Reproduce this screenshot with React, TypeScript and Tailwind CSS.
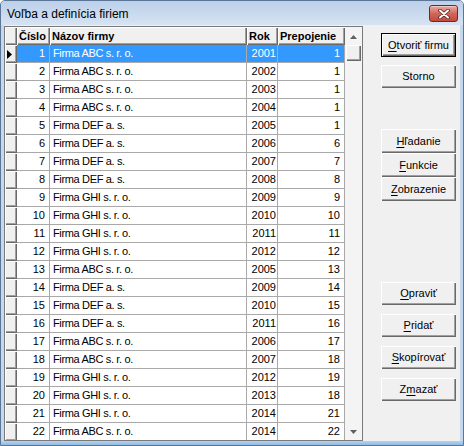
import React from 'react';

type Firm = { id: number; name: string; year: number; link: number };

const ABC = 'Firma ABC s. r. o.';
const DEF = 'Firma DEF a. s.';
const GHI = 'Firma GHI s. r. o.';

const firms: Firm[] = [
  { id: 1, name: ABC, year: 2001, link: 1 },
  { id: 2, name: ABC, year: 2002, link: 1 },
  { id: 3, name: ABC, year: 2003, link: 1 },
  { id: 4, name: ABC, year: 2004, link: 1 },
  { id: 5, name: DEF, year: 2005, link: 1 },
  { id: 6, name: DEF, year: 2006, link: 6 },
  { id: 7, name: DEF, year: 2007, link: 7 },
  { id: 8, name: DEF, year: 2008, link: 8 },
  { id: 9, name: GHI, year: 2009, link: 9 },
  { id: 10, name: GHI, year: 2010, link: 10 },
  { id: 11, name: GHI, year: 2011, link: 11 },
  { id: 12, name: GHI, year: 2012, link: 12 },
  { id: 13, name: ABC, year: 2005, link: 13 },
  { id: 14, name: DEF, year: 2009, link: 14 },
  { id: 15, name: DEF, year: 2010, link: 15 },
  { id: 16, name: DEF, year: 2011, link: 16 },
  { id: 17, name: ABC, year: 2006, link: 17 },
  { id: 18, name: ABC, year: 2007, link: 18 },
  { id: 19, name: GHI, year: 2012, link: 19 },
  { id: 20, name: GHI, year: 2013, link: 18 },
  { id: 21, name: GHI, year: 2014, link: 21 },
  { id: 22, name: ABC, year: 2014, link: 22 },
];

// classic 3D raised bevel
const raised =
  'bg-[#f0f0f0] shadow-[inset_1px_1px_0_#ffffff,inset_-1px_-1px_0_#696969,inset_-2px_-2px_0_#a0a0a0]';

const Btn: React.FC<{ label: string; u?: number; isDefault?: boolean; className?: string }> = ({
  label,
  u,
  isDefault,
  className = '',
}) => {
  const parts =
    u === undefined ? (
      label
    ) : (
      <>
        {label.slice(0, u)}
        <span className="underline underline-offset-2">{label[u]}</span>
        {label.slice(u + 1)}
      </>
    );
  return (
    <div
      className={`w-[75px] flex items-center justify-center text-[11px] text-black ${raised} ${
        isDefault ? 'border border-black' : ''
      } ${className}`}
    >
      {parts}
    </div>
  );
};

const HeadCell: React.FC<{ w: string; children?: React.ReactNode }> = ({ w, children }) => (
  <div className={`${w} h-full shrink-0 pl-[2px] flex items-center font-bold text-[11px] ${raised}`}>
    {children}
  </div>
);

export default function App() {
  return (
    <div className="w-[464px] h-[446px] flex flex-col bg-[#c6d8ee] border border-[#5b7696] rounded-t-[5px] font-['Liberation_Sans',Arial,sans-serif] overflow-hidden">
      {/* Title bar */}
      <div className="h-[24px] shrink-0 flex items-center justify-between pl-[6px] pr-[5px] bg-gradient-to-b from-[#bcd0e9] to-[#d6e3f2]">
        <span className="text-[12px] text-black mt-[1px]">Voľba a definícia firiem</span>
        <div className="w-[29px] h-[17px] mt-[1px] rounded-[3px] border border-[#6b2b25] bg-gradient-to-b from-[#e9aca3] via-[#d1675b] to-[#c2493c] flex items-center justify-center shadow-[inset_0_1px_0_#f4c9c3]">
          <svg width="12" height="10" viewBox="0 0 12 10">
            <path d="M2 1.5 L10 8.5 M10 1.5 L2 8.5" stroke="#55221d" strokeWidth="3.6" strokeLinecap="round" />
            <path d="M2 1.5 L10 8.5 M10 1.5 L2 8.5" stroke="#ffffff" strokeWidth="2" strokeLinecap="round" />
          </svg>
        </div>
      </div>

      {/* Client area */}
      <div className="flex-1 flex bg-[#f0f0f0] ml-[3px] mr-[3px]">
        {/* Grid */}
        <div className="w-[359px] h-[415px] mt-[1px] flex border border-[#7a7a7a] bg-white overflow-hidden">
          <div className="w-[340px] flex flex-col">
            <div className="h-[18px] shrink-0 flex">
              <HeadCell w="w-[12px]" />
              <HeadCell w="w-[33px]">Číslo</HeadCell>
              <HeadCell w="w-[197px]">Názov firmy</HeadCell>
              <HeadCell w="w-[31px]">Rok</HeadCell>
              <HeadCell w="w-[67px]">Prepojenie</HeadCell>
            </div>
            {firms.map((f) => {
              const sel = f.id === 1;
              const cell = `h-full shrink-0 flex items-center border-r border-b border-[#a9a9a9] text-[11px] ${
                sel ? 'bg-[#3399ff] text-white' : 'text-black'
              }`;
              return (
                <div key={f.id} className="h-[18px] shrink-0 flex">
                  <div className={`w-[12px] h-full shrink-0 flex items-center pl-[2px] ${raised}`}>
                    {sel && (
                      <svg width="5" height="9" viewBox="0 0 5 9">
                        <polygon points="0,0 5,4.5 0,9" fill="#000" />
                      </svg>
                    )}
                  </div>
                  <div className={`${cell} w-[33px] justify-end pr-[4px]`}>{f.id}</div>
                  <div className={`${cell} w-[197px] pl-[3px] tracking-[-0.35px]`}>{f.name}</div>
                  <div className={`${cell} w-[31px] justify-end pr-[1px]`}>{f.year}</div>
                  <div className={`${cell} w-[67px] justify-end pr-[4px]`}>{f.link}</div>
                </div>
              );
            })}
          </div>

          {/* Scrollbar */}
          <div className="w-[17px] flex flex-col bg-[#f4f4f4]">
            <div className="h-[18px] shrink-0 flex items-center justify-center pt-[1px]">
              <svg width="7" height="4" viewBox="0 0 7 4">
                <polygon points="0,4 3.5,0 7,4" fill="#606060" />
              </svg>
            </div>
            <div className={`h-[16px] shrink-0 mx-[1px] ${raised}`} />
            <div className="flex-1" />
            <div className="h-[17px] shrink-0 flex items-center justify-center">
              <svg width="7" height="4" viewBox="0 0 7 4">
                <polygon points="0,0 7,0 3.5,4" fill="#606060" />
              </svg>
            </div>
          </div>
        </div>

        {/* Buttons */}
        <div className="flex-1 flex flex-col pl-[18px] pt-[8px]">
          <Btn label="Otvoriť firmu" u={0} isDefault className="h-[24px]" />
          <Btn label="Storno" className="h-[23px] mt-[8px]" />
          <div className="flex flex-col mt-[41px]">
            <Btn label="Hľadanie" u={0} className="h-[24px]" />
            <Btn label="Funkcie" u={0} className="h-[24px]" />
            <Btn label="Zobrazenie" u={0} className="h-[24px]" />
          </div>
          <Btn label="Opraviť" u={0} className="h-[23px] mt-[81px]" />
          <Btn label="Pridať" u={0} className="h-[23px] mt-[9px]" />
          <Btn label="Skopírovať" u={0} className="h-[23px] mt-[9px]" />
          <Btn label="Zmazať" u={1} className="h-[23px] mt-[9px]" />
        </div>
      </div>

      {/* Bottom frame */}
      <div className="h-[4px] shrink-0 bg-gradient-to-b from-[#b9d2ec] to-[#8fbbe6]" />
    </div>
  );
}
